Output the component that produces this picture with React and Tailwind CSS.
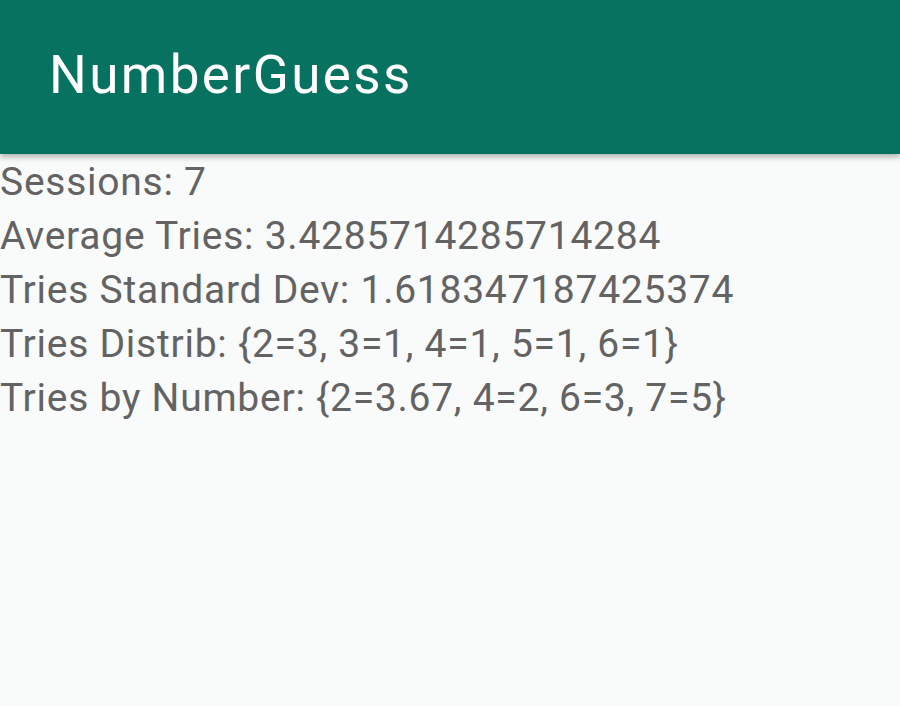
export default function App() {
  const lines = [
    "Sessions: 7",
    "Average Tries: 3.4285714285714284",
    "Tries Standard Dev: 1.618347187425374",
    "Tries Distrib: {2=3, 3=1, 4=1, 5=1, 6=1}",
    "Tries by Number: {2=3.67, 4=2, 6=3, 7=5}",
  ];
  return (
    <div className="w-[900px] h-[706px] bg-[#f9fafa] overflow-hidden" style={{ fontFamily: "Roboto, 'Liberation Sans', sans-serif" }}>
      <div className="relative h-[154px] bg-[#077260] flex items-center pl-[49px] shadow-[0_3px_6px_rgba(0,0,0,0.3)] z-10">
        <span className="text-white text-[53px] tracking-[2.4px] leading-none -mt-[4px]">NumberGuess</span>
      </div>
      <div className="flex flex-col text-[#636363] text-[39px] tracking-[0.75px] leading-[54px] pt-[1px]">
        {lines.map((l) => (
          <div key={l}>{l}</div>
        ))}
      </div>
    </div>
  );
}
